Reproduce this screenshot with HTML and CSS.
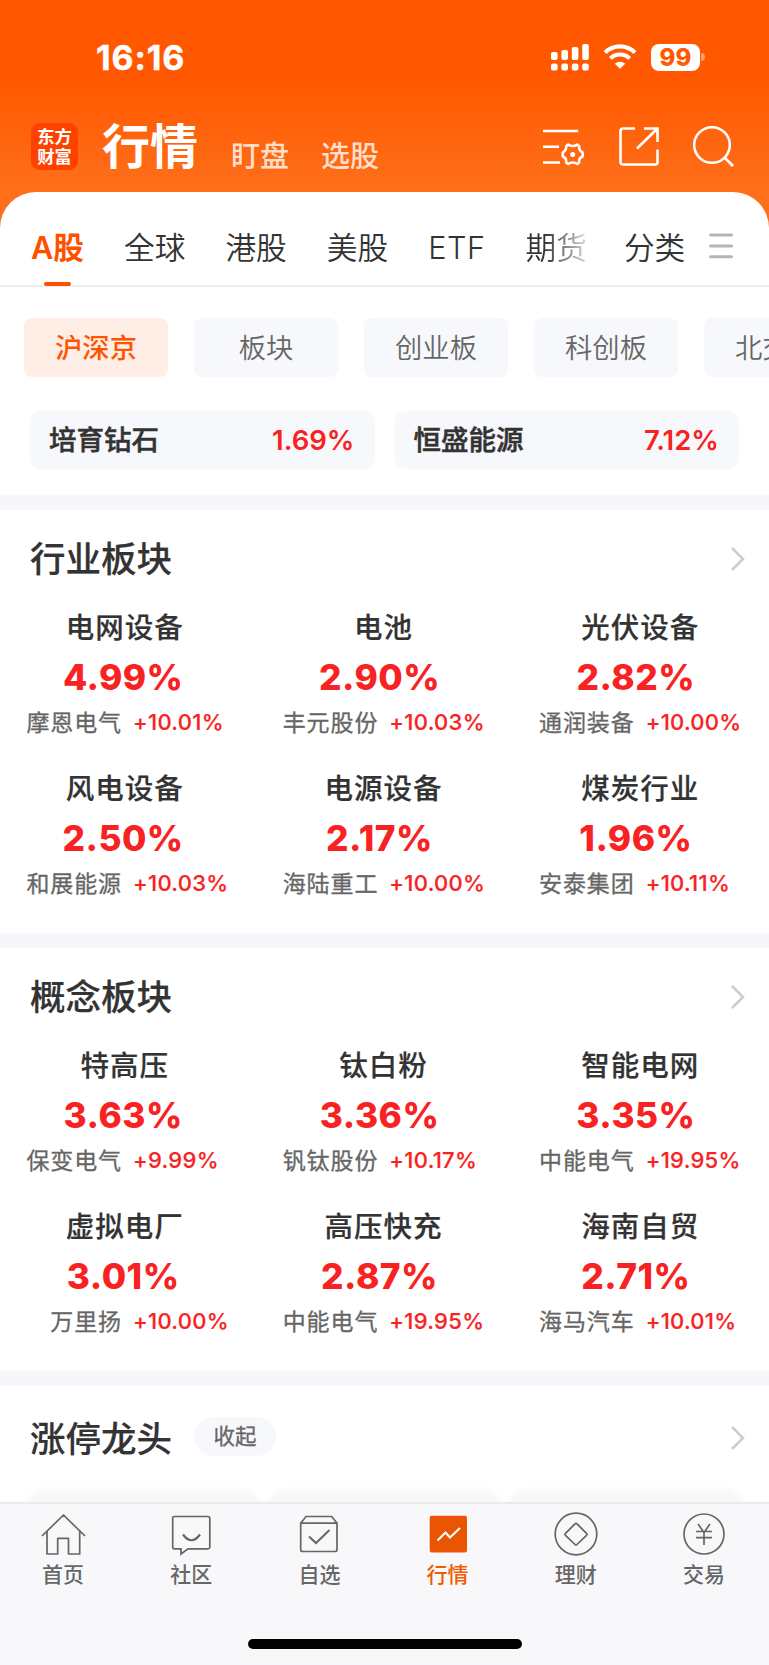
FILE: index.html
```html
<!DOCTYPE html>
<html lang="zh-CN">
<head>
  <meta charset="UTF-8">
  <meta name="viewport" content="width=device-width, initial-scale=1.0">
  <title>行情</title>
  <link rel="stylesheet" href="styles.css">
</head>
<body>
  <header class="top">
    <div class="status">
      <span class="time">16:16</span>
      <svg class="signal" width="38" height="28" viewBox="0 0 38 28" fill="#fff">
        <rect x="0" y="9" width="6.6" height="8" rx="2"/><rect x="10.4" y="7" width="6.6" height="10" rx="2"/>
        <rect x="20.8" y="4" width="6.6" height="13" rx="2"/><rect x="31.2" y="1" width="6.6" height="16" rx="2"/>
        <rect x="0" y="20.5" width="6.6" height="7" rx="2"/><rect x="10.4" y="20.5" width="6.6" height="7" rx="2"/>
        <rect x="20.8" y="20.5" width="6.6" height="7" rx="2"/><rect x="31.2" y="20.5" width="6.6" height="7" rx="2"/>
      </svg>
      <svg class="wifi" width="34" height="26" viewBox="0 0 34 26" fill="none" stroke="#fff">
        <path d="M2 8.5a21.5 21.5 0 0 1 30 0" stroke-width="4.2"/>
        <path d="M7.3 14.4a14 14 0 0 1 19.4 0" stroke-width="4"/>
        <path d="M17 24.8l-5.2-5a7.4 7.4 0 0 1 10.4 0z" fill="#fff" stroke="none"/>
      </svg>
      <span class="battery">99</span>
      <svg class="cap" width="4" height="8" viewBox="0 0 4 8"><path d="M0 0a4 4 0 0 1 0 8z" fill="#ff9d6b"/></svg>
    </div>
    <div class="titlebar">
      <div class="logo">东方<br>财富</div>
      <h1>行情</h1>
      <a class="sub">盯盘</a>
      <a class="sub">选股</a>
      <div class="tools">
        <svg width="42" height="42" viewBox="0 0 42 42" fill="none" stroke="#fff" stroke-width="2.6">
          <path d="M0 6h35.3M0 21.7h16M0 37.5h17"/>
          <path d="M25.2 19.6Q29.7 22.4 34.2 19.6L36.2 21Q35.4 25.4 39.6 27.4V31.6Q35.4 33 36.2 37.5L34.2 38.9Q29.7 36.2 25.2 38.9L23.2 37.5Q23.8 33 19.8 31.5V27.3Q23.8 25.4 23.2 21Z" stroke-linejoin="round"/>
          <circle cx="29.7" cy="29.4" r="2.5" fill="#fff" stroke="none"/>
        </svg>
        <svg width="40" height="42" viewBox="0 0 40 42" fill="none" stroke="#fff" stroke-width="2.6">
          <path d="M16 3.5H4a2.5 2.5 0 0 0-2.5 2.5V37a2.5 2.5 0 0 0 2.5 2.5H36a2.5 2.5 0 0 0 2.5-2.5V24.5"/>
          <path d="M25 3.5H38.5V17M38.5 3.5L18 23.500"/>
        </svg>
        <svg width="42" height="42" viewBox="0 0 42 42" fill="none" stroke="#fff" stroke-width="2.6">
          <circle cx="19" cy="20" r="17.8"/><path d="M31.5 32.5l8.500 8.500"/>
        </svg>
      </div>
    </div>
  </header>

  <main class="panel">
    <nav class="markets">
      <a class="active">A股</a><a>全球</a><a>港股</a><a>美股</a><a class="etf">ETF</a><a class="fade">期货</a><a class="all">分类</a>
      <svg width="24" height="26" viewBox="0 0 24 26" stroke="#b5b5b5" stroke-width="3" stroke-linecap="round"><path d="M1.5 2h21M1.5 13h21M1.5 23.7h21"/></svg>
    </nav>

    <div class="chips">
      <a class="chip on">沪深京</a><a class="chip">板块</a><a class="chip">创业板</a><a class="chip">科创板</a><a class="chip">北交所</a>
    </div>

    <div class="hot">
      <div class="hot-item"><b>培育钻石</b><span>1.69%</span></div>
      <div class="hot-item"><b>恒盛能源</b><span>7.12%</span></div>
    </div>

    <section class="block">
      <div class="head">
        <h2>行业板块</h2>
        <svg class="arrow" width="16" height="26" viewBox="0 0 16 26"><path d="M2 2l11 11L2 24"/></svg>
      </div>
      <div class="grid">
        <div class="cell"><h3>电网设备</h3><strong>4.99%</strong><p><span>摩恩电气</span><em>+10.01%</em></p></div>
        <div class="cell"><h3>电池</h3><strong>2.90%</strong><p><span>丰元股份</span><em>+10.03%</em></p></div>
        <div class="cell"><h3>光伏设备</h3><strong>2.82%</strong><p><span>通润装备</span><em>+10.00%</em></p></div>
        <div class="cell"><h3>风电设备</h3><strong>2.50%</strong><p><span>和展能源</span><em>+10.03%</em></p></div>
        <div class="cell"><h3>电源设备</h3><strong>2.17%</strong><p><span>海陆重工</span><em>+10.00%</em></p></div>
        <div class="cell"><h3>煤炭行业</h3><strong>1.96%</strong><p><span>安泰集团</span><em>+10.11%</em></p></div>
      </div>
    </section>

    <section class="block">
      <div class="head">
        <h2>概念板块</h2>
        <svg class="arrow" width="16" height="26" viewBox="0 0 16 26"><path d="M2 2l11 11L2 24"/></svg>
      </div>
      <div class="grid">
        <div class="cell"><h3>特高压</h3><strong>3.63%</strong><p><span>保变电气</span><em>+9.99%</em></p></div>
        <div class="cell"><h3>钛白粉</h3><strong>3.36%</strong><p><span>钒钛股份</span><em>+10.17%</em></p></div>
        <div class="cell"><h3>智能电网</h3><strong>3.35%</strong><p><span>中能电气</span><em>+19.95%</em></p></div>
        <div class="cell"><h3>虚拟电厂</h3><strong>3.01%</strong><p><span>万里扬</span><em>+10.00%</em></p></div>
        <div class="cell"><h3>高压快充</h3><strong>2.87%</strong><p><span>中能电气</span><em>+19.95%</em></p></div>
        <div class="cell"><h3>海南自贸</h3><strong>2.71%</strong><p><span>海马汽车</span><em>+10.01%</em></p></div>
      </div>
    </section>

    <section class="block leaders">
      <div class="head">
        <h2>涨停龙头</h2>
        <a class="pill">收起</a>
        <svg class="arrow" width="16" height="26" viewBox="0 0 16 26"><path d="M2 2l11 11L2 24"/></svg>
      </div>
      <div class="cards"><div></div><div></div><div></div></div>
    </section>
  </main>

  <footer class="tabbar">
    <nav class="tabs">
      <a>
        <svg viewBox="0 0 44 44"><path d="M1 23L22.5 2 44 23M6 18.5V41H16.7V25.3H27.5V41H38.7V18.5" stroke-linejoin="round"/></svg>
        首页
      </a>
      <a>
        <svg viewBox="0 0 44 44"><path d="M5.5 3.5H39a1.8 1.8 0 0 1 1.8 1.8V34a1.8 1.8 0 0 1-1.8 1.8H19L12 41V35.8H5.5A1.8 1.8 0 0 1 3.7 34V5.3a1.8 1.8 0 0 1 1.8-1.8z"/><path d="M14 21.5q8.5 11.5 17 0" stroke-width="2.2"/></svg>
        社区
      </a>
      <a>
        <svg viewBox="0 0 44 44"><path d="M3.7 10.2H40V36.5a2 2 0 0 1-2 2H5.7a2 2 0 0 1-2-2zL9 3.5H34.7L40 10.2"/><path d="M12 23.5l7 6.5 13.5-13" stroke-width="2"/></svg>
        自选
      </a>
      <a class="current">
        <svg viewBox="0 0 44 44"><rect x="3.7" y="2.8" width="37.3" height="36.7" rx="2" fill="#ea5504" stroke="none"/><path d="M11.5 27.5l8-8 4.5 5L34 15" stroke="#fff" stroke-width="2.2"/></svg>
        行情
      </a>
      <a>
        <svg viewBox="0 0 44 44"><circle cx="22" cy="21" r="20.8"/><path d="M21 10.8q1-1 2 0l9.5 9.5q1 1 0 2L23 31.5q-1 1-2 0L11.5 22.3q-1-1 0-2z"/></svg>
        理财
      </a>
      <a>
        <svg viewBox="0 0 44 44"><circle cx="22" cy="21" r="20"/><path d="M16 11l6 8.5L28 11M22 19.5V32M14 18.5H30M14 24.7H30"/></svg>
        交易
      </a>
    </nav>
    <div class="home-bar"></div>
  </footer>
</body>
</html>
```
FILE: styles.css
```css
* {
  box-sizing: border-box;
}
body {
  margin: 0;
  height: 1665px;
  display: flex;
  flex-direction: column;
  overflow: hidden;
  background: linear-gradient(#ff5800 0, #ff5800 80px, #ff6f1a 190px);
  font-family: Inter, "Noto Sans CJK SC", sans-serif;
  color: #333;
}
h1, h2, h3, p {
  margin: 0;
}
svg {
  display: block;
  flex: none;
  overflow: visible;
}

/* 顶部 */
.top {
  height: 192px;
  flex: none;
  color: #fff;
}
.status {
  height: 114px;
  padding: 0 64px 0 96px;
  display: flex;
  align-items: center;
}
.time {
  font-size: 34px;
  font-weight: 700;
  letter-spacing: 0.9px;
  margin-right: auto;
  -webkit-text-stroke: 0.4px;
}
.wifi {
  margin: 0 14px 0 14px;
}
.battery {
  width: 49px;
  height: 27px;
  border-radius: 8px;
  background: #fff;
  color: #ff5800;
  font-size: 24px;
  font-weight: 800;
  line-height: 27px;
  text-align: center;
}
.cap {
  margin-left: 1px;
}
.titlebar {
  display: flex;
  height: 66px;
  padding: 0 34px 0 31px;
  align-items: center;
}
.logo {
  width: 47px;
  height: 47px;
  border-radius: 9px;
  background: #ff4100;
  font-size: 17.3px;
  font-weight: 700;
  line-height: 19.5px;
  padding-top: 4px;
  margin-top: -1px;
  text-align: center;
}
.titlebar h1 {
  font-size: 48px;
  font-weight: 700;
  line-height: 66px;
  margin: 0 33px 0 24px;
}
.sub {
  font-size: 29px;
  font-weight: 500;
  line-height: 32px;
  color: #ffdfcc;
  margin: 19px 32px 0 0;
}
.tools {
  margin: -2px 0 0 auto;
  display: flex;
  gap: 34px;
}

/* 白色面板 */
.panel {
  flex: 1;
  min-height: 0;
  overflow: hidden;
  background: #fff;
  border-radius: 36px 36px 0 0;
}
.markets {
  height: 95px;
  border-bottom: 2px solid #eeeef0;
  padding: 0 36px 0 31px;
  display: flex;
  align-items: center;
  font-size: 30.7px;
  font-weight: 350;
  line-height: 111px;
  color: #333;
}
.markets a {
  position: relative;
  margin-right: 40px;
  height: 94px;
}
.markets svg {
  margin-top: 14px;
}
.markets .active {
  color: #ff5000;
  font-weight: 600;
}
.markets .active::after {
  content: "";
  position: absolute;
  left: 13px;
  bottom: 0;
  width: 27px;
  height: 4px;
  border-radius: 2px;
  background: #ff5000;
}
.markets .etf {
  letter-spacing: 0.5px;
}
.markets .fade {
  background: linear-gradient(90deg, #333 30%, #ccc 95%);
  -webkit-background-clip: text;
  color: transparent;
  margin-right: 37px;
}
.markets .all {
  margin-right: auto;
}
.chips {
  display: flex;
  gap: 26px;
  padding: 31px 0 0 24px;
}
.chip {
  flex: 0 0 144px;
  height: 59px;
  line-height: 61px;
  border-radius: 8px;
  background: #f7f8fb;
  text-align: center;
  font-size: 27.3px;
  font-weight: 350;
  color: #666;
}
.chip.on {
  background: #ffeee6;
  color: #ff5500;
  font-weight: 500;
}
.hot {
  display: flex;
  gap: 20px;
  padding: 34px 30px 26px;
}
.hot-item {
  flex: 1;
  height: 58px;
  padding: 0 20px 0 19px;
  border-radius: 11px;
  background: #f7f8fb;
  display: flex;
  align-items: center;
  justify-content: space-between;
  font-size: 27.5px;
}
.hot-item b {
  font-weight: 500;
  line-height: 58px;
  height: 58px;
  -webkit-text-stroke: 0.5px;
}
.hot-item span {
  color: #f82222;
  font-weight: 600;
}

/* 板块 */
.block {
  height: 438px;
  border-top: 15px solid #f6f7fb;
}
.head {
  height: 87px;
  padding: 11px 23px 0 30px;
  display: flex;
  align-items: center;
}
h2 {
  font-size: 35.5px;
  font-weight: 500;
  line-height: 50px;
  padding-top: 2px;
  -webkit-text-stroke: 0.2px;
}
.arrow {
  margin-left: auto;
  fill: none;
  stroke: #ccc;
  stroke-width: 2.5;
}
.grid {
  display: grid;
  grid-template-columns: repeat(3, 1fr);
  grid-auto-rows: 160.5px;
}
.cell {
  text-align: center;
}
.cell h3 {
  font-size: 28.5px;
  font-weight: 500;
  letter-spacing: 1px;
  line-height: 61px;
  height: 60px;
  margin-right: 7px;
  -webkit-text-stroke: 0.2px;
}
.cell:nth-child(3n+2) h3 {
  margin-right: 2px;
}
.cell:nth-child(3n) h3 {
  margin-right: 1px;
}
.cell strong {
  display: block;
  font-size: 35.3px;
  font-weight: 800;
  letter-spacing: 0.5px;
  line-height: 42px;
  color: #f82222;
  margin-right: 10px;
}
.cell p {
  display: grid;
  grid-template-columns: 96px 1fr;
  column-gap: 11px;
  margin-left: 26px;
  line-height: 48px;
  text-align: left;
}
.cell span {
  font-size: 23px;
  letter-spacing: 0.9px;
  color: #666;
  text-align: right;
  -webkit-text-stroke: 0.3px;
}
.cell em {
  font-size: 22px;
  font-style: normal;
  font-weight: 500;
  letter-spacing: 0.3px;
  line-height: 47px;
  color: #f82222;
  -webkit-text-stroke: 0.2px;
}
.pill {
  width: 82px;
  height: 39px;
  margin: -4px 0 0 22px;
  border-radius: 20px;
  background: #f7f8fb;
  text-align: center;
  font-size: 21.5px;
  line-height: 39px;
  color: #666;
  -webkit-text-stroke: 0.3px;
}
.leaders .head {
  height: 105px;
  padding-top: 0;
  padding-bottom: 1px;
}
.leaders h2 {
  padding-top: 3px;
}
.cards {
  display: grid;
  grid-template-columns: repeat(3, 1fr);
  gap: 10px;
  padding: 0 28px;
}
.cards div {
  height: 100px;
  border-radius: 16px;
  background: #f8f8fa;
  box-shadow: 0 0 8px #f4f4f6;
}

/* 底部导航 */
.tabbar {
  height: 163px;
  flex: none;
  background: #f8f8fb;
  border-top: 2px solid #e9eaec;
}
.tabs {
  display: grid;
  grid-template-columns: repeat(6, 1fr);
  padding-top: 9px;
  margin: 0 1px 0 -1px;
}
.tabs a {
  display: flex;
  flex-direction: column;
  align-items: center;
  font-size: 21px;
  font-weight: 500;
  line-height: 36px;
  color: #666;
}
.tabs svg {
  width: 44px;
  height: 44px;
  fill: none;
  stroke: #666;
  stroke-width: 1.7;
}
.tabs .current {
  color: #f05a00;
}
.home-bar {
  width: 274px;
  height: 10px;
  margin: 46px auto 0;
  border-radius: 5px;
  background: #000;
}
```
